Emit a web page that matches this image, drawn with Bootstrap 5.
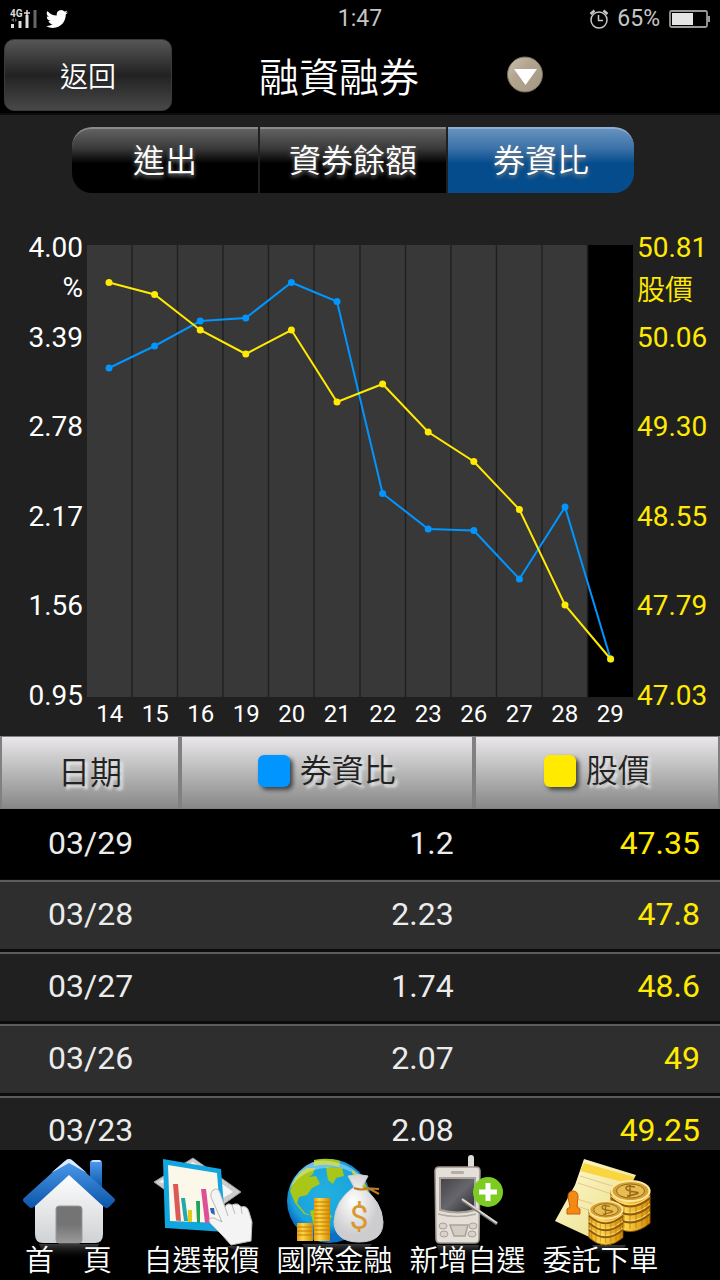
<!DOCTYPE html>
<html lang="zh-Hant">
<head>
<meta charset="utf-8">
<meta name="viewport" content="width=device-width, initial-scale=1">
<title>融資融券</title>
<link href="https://cdn.jsdelivr.net/npm/bootstrap@5.3.0/dist/css/bootstrap.min.css" rel="stylesheet">
<style>
body { font-family: Roboto, "Noto Sans CJK TC", sans-serif; background: #202020; color: #fff; font-weight: 400; }
.cjk { font-family: "Noto Sans CJK TC", sans-serif; font-weight: 350; }
.statusbar { height: 36px; background: #000; color: #c6c6c6; font-size: 23px; line-height: 38px; padding: 0 10px; }
.titlebar { height: 79px; background: #000; border-bottom: 2px solid #0c0c0c; padding: 3px 4px; display: grid; grid-template-columns: 168px 1fr 210px; align-items: start; }
.back-btn { height: 72px; border: 1px solid #3a3a3a; border-radius: 10px; color: #fff; font-size: 28px; padding: 0; background: linear-gradient(#565656, #222 50%, #484848); }
.back-btn:hover, .back-btn:active { color: #fff; }
.page-title { font-size: 40px; line-height: 72px; }
.menu-btn { width: 38px; height: 38px; padding: 0; border: 0; background: none; line-height: 0; }
.tabs { margin: 12px 86px 0 72px; gap: 2px; }
.tabs .btn { flex: 1 1 0; height: 66px; border: 0; border-top: 2px solid #8a8a8a; border-radius: 0; padding: 0 0 6px; color: #fff; font-size: 32px; line-height: 56px; text-shadow: 0 2px 4px #888; background: linear-gradient(#626262, #3a3a3a 30%, #000 54%); }
.tabs .btn:first-child { border-radius: 20px 0 0 20px; }
.tabs .btn:last-child { border-radius: 0 20px 20px 0; }
.tabs .btn.active { color: #fff; border-color: #8eaed0; background: linear-gradient(#6691bd, #3c72a9 30%, #054c8c 54%); }
.chart { display: grid; grid-template-columns: 87px 1fr 87px; margin-top: 34px; padding-bottom: 5px; font-size: 28px; }
.axis { display: grid; grid-template-rows: repeat(5, 1fr) 40px; height: 489px; line-height: 40px; padding-top: 1px; }
.axis-left { text-align: right; padding-right: 4px; }
.axis-right { color: #ffea00; padding-left: 4px; }
.plot { padding-top: 18px; }
.days { display: grid; grid-template-columns: repeat(12, 1fr); font-size: 24px; line-height: 34px; text-align: center; }
.quotes { table-layout: fixed; width: 100%; font-size: 32px; border-collapse: separate; border-spacing: 0; }
.quotes th { height: 73px; padding: 0 0 9px; font-size: 32px; color: #222; text-align: center; border: 2px solid #808080; border-width: 1px 2px; text-shadow: 3px 3px 3px #eee; background: linear-gradient(#e9e7e9, #888); }
.quotes th:first-child { padding: 0 0 5px; }
.quotes td { height: 72px; padding: 0 20px 3px; text-align: right; border-bottom: 3px solid #0c0c0c; border-top: 2px solid #5c5c5c; color: #ececec; }
.quotes td:first-child { text-align: left; padding-left: 48px; }
.quotes td.yel { color: #ffea00; }
.quotes tbody tr:nth-child(even) { background: #2e2e2e; }
.quotes tbody tr:nth-child(odd) { background: #202020; }
.quotes tbody tr:first-child { background: #000; }
.quotes tbody tr:first-child td { border-top-width: 0; border-bottom-width: 1px; height: 71px; }
.swatch { display: inline-block; width: 32px; height: 32px; border-radius: 6px; margin-right: 10px; vertical-align: -5px; box-shadow: 3px 3px 4px #444; }
.bottombar { background: #000; padding: 4px 53px 4px 2px; }
.bottombar a { flex: 1 1 0; min-width: 0; color: #fff; font-size: 29px; line-height: 36px; text-align: center; text-decoration: none; white-space: nowrap; }
.bottombar svg { display: block; margin: 0 auto; }
.bottombar span { display: block; margin-top: -18px; position: relative; }
</style>
</head>
<body class="vh-100 d-flex flex-column overflow-hidden">
<header>
  <div class="statusbar row g-0 align-items-center">
    <div class="col d-flex align-items-center">
      <svg width="28" height="22" viewBox="0 0 28 22" aria-hidden="true"><text x="0" y="9" font-size="10" font-weight="700" fill="#ddd">4G</text><path d="M14 5h6M17 2v6" stroke="#ddd" stroke-width="1.5"/><path d="M17 7v13" stroke="#ddd" stroke-width="3"/><path d="M10 13v7M2.500 16v4" stroke="#ddd" stroke-width="3"/><path d="M25 2v18" stroke="#666" stroke-width="3"/><path d="M1 12l3-2v4zM7 12l-2-2v4z" fill="#666"/></svg>
      <svg class="ms-2" width="22" height="20" viewBox="0 2 24 20" aria-hidden="true"><path fill="#fff" d="M23.950 4.570a10 10 0 0 1-2.820.770 4.960 4.960 0 0 0 2.160-2.720 9.900 9.900 0 0 1-3.120 1.180 4.920 4.920 0 0 0-8.380 4.480A13.930 13.930 0 0 1 1.640 3.160a4.920 4.920 0 0 0 1.520 6.570 4.900 4.900 0 0 1-2.230-.610v.060a4.920 4.920 0 0 0 3.950 4.820 5 5 0 0 1-2.210.080 4.940 4.940 0 0 0 4.600 3.420A9.870 9.870 0 0 1 0 19.540a13.940 13.940 0 0 0 7.550 2.210c9.050 0 14-7.500 14-13.990 0-.210 0-.420-.020-.630a9.940 9.940 0 0 0 2.420-2.560z"/></svg>
    </div>
    <div class="col-auto">1:47</div>
    <div class="col d-flex align-items-center justify-content-end">
      <svg width="20" height="20" viewBox="0 0 20 20" fill="none" stroke="#c6c6c6" stroke-width="1.500" aria-hidden="true"><circle cx="10" cy="11" r="8"/><path d="M9.500 6v5.500H14"/><path d="M1.500 5l4-3.500M14.500 1.500l4 3.500" stroke-width="2.500"/></svg>
      <span class="ms-2 me-2">65%</span>
      <svg width="42" height="20" viewBox="0 0 42 20" aria-hidden="true"><rect x="2" y="2" width="37" height="16" rx="1.500" fill="none" stroke="#999" stroke-width="1.800"/><path d="M4 4h21v12H4z" fill="#e4e4e4"/><path d="M39 7h3v6h-3z" fill="#999"/></svg>
    </div>
  </div>
  <div class="titlebar">
    <button type="button" class="btn back-btn cjk">返回</button>
    <h1 class="page-title cjk text-center m-0">融資融券</h1>
    <button type="button" class="btn menu-btn align-self-center" aria-label="選單"><svg width="38" height="38" viewBox="0 0 38 38"><defs><linearGradient id="tan" x2="1" y2="1"><stop stop-color="#cdc3b3"/><stop offset=".4" stop-color="#b2a48f"/><stop offset="1" stop-color="#a39985"/></linearGradient></defs><circle cx="19" cy="18.500" r="17.500" fill="url(#tan)" stroke="#756b5c"/><path d="M8 13h23L19.500 29z" fill="#fff"/></svg></button>
  </div>
</header>
<nav class="tabs d-flex" aria-label="圖表">
  <button type="button" class="btn cjk">進出</button>
  <button type="button" class="btn cjk">資券餘額</button>
  <button type="button" class="btn cjk active" aria-pressed="true">券資比</button>
</nav>
<section class="chart">
  <div class="axis axis-left"><div>4.00<br>%</div><div>3.39</div><div>2.78</div><div>2.17</div><div>1.56</div><div>0.95</div></div>
  <div class="plot">
    <svg class="d-block w-100" viewBox="0 0 546 452" role="img" aria-label="券資比與股價">
      <rect width="501" height="452" fill="#383838"/><rect x="501" width="45" height="452" fill="#000"/>
      <path d="M45 0V452M90.500 0V452M136 0V452M181.500 0V452M227 0V452M273 0V452M318.500 0V452M364 0V452M409.500 0V452M455 0V452M500.500 0V452" stroke="#202020" stroke-width="1.500"/>
      <g id="blue" fill="#0095ff"></g><g id="yellow" fill="#ffea00"></g>
    </svg>
    <div class="days"><span>14</span><span>15</span><span>16</span><span>19</span><span>20</span><span>21</span><span>22</span><span>23</span><span>26</span><span>27</span><span>28</span><span>29</span></div>
  </div>
  <div class="axis axis-right"><div>50.81<br><span class="cjk">股價</span></div><div>50.06</div><div>49.30</div><div>48.55</div><div>47.79</div><div>47.03</div></div>
</section>
<main class="flex-grow-1 overflow-hidden">
  <table class="quotes">
    <colgroup><col style="width:25%"><col style="width:40.8%"><col style="width:34.2%"></colgroup>
    <thead><tr><th class="cjk">日期</th><th class="cjk"><i class="swatch" style="background:#0095ff"></i>券資比</th><th class="cjk"><i class="swatch" style="background:#ffea00"></i>股價</th></tr></thead>
    <tbody>
      <tr><td>03/29</td><td>1.2</td><td class="yel">47.35</td></tr>
      <tr><td>03/28</td><td>2.23</td><td class="yel">47.8</td></tr>
      <tr><td>03/27</td><td>1.74</td><td class="yel">48.6</td></tr>
      <tr><td>03/26</td><td>2.07</td><td class="yel">49</td></tr>
      <tr><td>03/23</td><td>2.08</td><td class="yel">49.25</td></tr>
    </tbody>
  </table>
</main>
<nav class="bottombar d-flex flex-shrink-0 cjk" aria-label="主選單">
  <a href="#"><svg width="110" height="104" viewBox="0 0 110 104"><defs><linearGradient id="roof" x2="0" y2="1"><stop stop-color="#4f9df0"/><stop offset="1" stop-color="#0b55a8"/></linearGradient><linearGradient id="wall" x2="0" y2="1"><stop stop-color="#fff"/><stop offset="1" stop-color="#cfd2d4"/></linearGradient><linearGradient id="door" x2="0" y2="1"><stop offset=".5" stop-color="#747474"/><stop offset="1" stop-color="#9a9a9a"/></linearGradient><linearGradient id="glow" x2="0" y2="1"><stop stop-color="#777" stop-opacity=".5"/><stop offset="1" stop-color="#222" stop-opacity="0"/></linearGradient></defs>
    <path d="M76 9q0-3 3-3h6q3 0 3 3v25L76 23z" fill="url(#roof)"/><path d="M77 8q1-2 3-2h5q2 0 2 2z" fill="#cfe2fa"/><path d="M55 18L89 46v34q0 9-8 9H29q-8 0-8-9V46z" fill="url(#wall)"/><rect x="42" y="52" width="26" height="37" rx="3" fill="url(#door)" stroke="#999"/><path d="M25 90h60l-6 14H31z" fill="url(#glow)"/><path d="M51 7q4-4 8 0l41 37q2 2 0 4l-5 5q-2 2-5 0L55 21 20 53q-3 2-5 0l-5-5q-2-2 0-4z" fill="url(#roof)"/><path d="M51 7q4-4 8 0l14 12-18-10-18 10z" fill="#dceaff"/></svg><span>首　頁</span></a>
  <a href="#"><svg width="110" height="104" viewBox="0 0 110 104">
    <path d="M7 28L46 4l48 34-37 26z" fill="#ccc" stroke="#999"/><path d="M12 28L46 8l40 30-10 6z" fill="#f6f6f6"/><path d="M16 5l58 10 5 63-61-4z" fill="#12a6e0"/><path d="M21 11l49 8 4 50-51-2z" fill="#fbf7e9"/><path d="M26 30h5l3 37-5-.5z" fill="#dc5a55"/><path d="M34 44h4l3 23h-4z" fill="#20a8ac"/><path d="M41 56h4v12h-4z" fill="#e3ca16"/><path d="M49 47h4v22h-3z" fill="#20a45c"/><path d="M54 35h5l4 34h-5z" fill="#db5096"/><path d="M63 54h4l1 7-4-2z" fill="#3161b8"/>
    <path d="M66 36q5-3 7 3l5 14q2-5 7-2 6-3 9 2 6-2 8 5l3 10-1 19-20 4-9-10-12-12q-3-6 4-5l8 4-11-25q-1-4 2-7z" fill="#f4f4f4" stroke="#bbb"/><path d="M78 53l3 9M85 51l3 9M94 53l1 7" stroke="#bbb" fill="none"/><path d="M80 92h24l-12 8z" fill="url(#glow)"/></svg><span>自選報價</span></a>
  <a href="#"><svg width="110" height="104" viewBox="0 0 110 104"><defs><radialGradient id="sea" cx=".45" cy=".4"><stop stop-color="#22b0e0"/><stop offset=".8" stop-color="#1aa3da"/><stop offset="1" stop-color="#0b70c4"/></radialGradient><linearGradient id="gold"><stop stop-color="#e8a010"/><stop offset=".35" stop-color="#ffd54a"/><stop offset="1" stop-color="#d48a00"/></linearGradient><radialGradient id="bag" cx=".4" cy=".4"><stop stop-color="#fff"/><stop offset="1" stop-color="#cdcdcf"/></radialGradient></defs>
    <circle cx="49" cy="47" r="42" fill="url(#sea)"/><path d="M10 37Q14 21 27 14l8 0-2 6-4 3 7-1 4 8-8 4-5 7-8 2-2 6 8 10 8 3-9-2-9-11zM34 6q14-3 26 1l-1 6q-13-4-25-1zM46 13l16 1 2 8-8 2-3 6-5-4zM30 57l10-3 12 8-6 9-7 14-5-13zM72 16q15 10 18 26l-16-8z" fill="#a9c718"/><path d="M9 36Q21 3 49 7t39 24Q68 10 45 14 21 16 9 36z" fill="#fff" opacity=".35"/>
    <rect x="34" y="44" width="16" height="43" fill="url(#gold)"/><rect x="17" y="69" width="16" height="18" fill="url(#gold)"/><path d="M34 48h16m-16 4h16m-16 4h16m-16 4h16m-16 4h16m-16 4h16m-16 4h16m-16 4h16m-16 4h16M17 73h16m-16 4h16m-16 4h16" stroke="#c07e00" fill="none"/>
    <path d="M68 22q10-3 20 0l-6 11q20 14 21 35 0 20-24 20T54 68q1-22 20-35z" fill="url(#bag)" stroke="#ccc"/><path d="M74 34q8 3 14 0l11 6M84 34l15 1" fill="none" stroke="#bd7d22" stroke-width="2"/><text x="79" y="75" text-anchor="middle" font-family="Roboto" font-size="34" font-weight="400" fill="#d99831">$</text><path d="M22 90h70l-10 12H30z" fill="url(#glow)"/></svg><span>國際金融</span></a>
  <a href="#"><svg width="110" height="104" viewBox="0 0 110 104"><defs><linearGradient id="screen" x2="1" y2="1"><stop stop-color="#444"/><stop offset=".5" stop-color="#66666d"/><stop offset="1" stop-color="#27272b"/></linearGradient></defs>
    <rect x="55" y="1" width="6" height="20" rx="3" fill="#ddd"/><path d="M22 17q0-4 4-4h37q4 0 4 4l-1 68q0 4-4 4H27q-4 0-4-4z" fill="#e4e0d9" stroke="#a0958e" stroke-width="1.500"/><rect x="38" y="17" width="13" height="3" rx="1" fill="#b5aea5"/><path d="M27 24h35v32q-17 5-35 0z" fill="url(#screen)" stroke="#aaa49d" stroke-width="2"/><path d="M25 60q19 5 38 0" fill="none" stroke="#b5aca1" stroke-width="1.500"/><path d="M37 71h18l-3 11H41z" fill="#d2ccc2" stroke="#aaa198" stroke-width="1.500"/><g fill="#d8d2c9" stroke="#aaa198"><ellipse cx="30" cy="72" rx="4" ry="3"/><ellipse cx="60" cy="72" rx="4" ry="3"/><ellipse cx="31" cy="80" rx="4" ry="3"/><ellipse cx="59" cy="80" rx="4" ry="3"/></g><circle cx="75" cy="38" r="15" fill="#7dcc22"/><path d="M75 29v18M66 38h18" stroke="#fff" stroke-width="5"/><path d="M49 46l35 24" stroke="#777" stroke-width="3"/><path d="M49 45l35 24" stroke="#ddd8d0" stroke-width="2"/><path d="M24 91h42l-3 12H27z" fill="url(#glow)"/></svg><span>新增自選</span></a>
  <a href="#"><svg width="110" height="104" viewBox="0 0 110 104"><defs><linearGradient id="paper" x2="1" y2="1"><stop stop-color="#fffad1"/><stop offset="1" stop-color="#e7db80"/></linearGradient><g id="coins"><path d="M0 8v33q19 17 39 0V8z" fill="url(#gold)" stroke="#8b5a0a"/><path d="M0 16q19 17 39 0M0 24q19 17 39 0M0 32q19 17 39 0" fill="none" stroke="#8b5a0a" stroke-width="2"/><path d="M0 14q19 17 39 0M0 22q19 17 39 0M0 30q19 17 39 0" fill="none" stroke="#f6dd89"/><path d="M3 20v23M8 23v22M13 25v21M19 26v21M25 25v21M31 23v21M36 20v22" stroke="#98600c" opacity=".5"/><ellipse cx="19.500" cy="9" rx="19" ry="10" fill="#d4a037" stroke="#ffe8a0" stroke-width="2"/><ellipse cx="19.500" cy="9" rx="14" ry="7" fill="#e5bd52" stroke="#956813"/><path d="M24 5q-9-2-9 1t9 4-8 4M19 3v12" stroke="#9b6814" fill="none" stroke-width="1.500"/></g></defs>
    <path d="M38 5l52 16-32 62-4 5L9 67l20-36z" fill="url(#paper)"/><path d="M38 9l50 14-3 7-51-13z" fill="#f9d640"/><path d="M34 22l42 13M32 29l40 13M28 44l32 10M26 50l24 9" stroke="#ecc48c"/><path d="M22 43q0-6 5-6t5 6l-1 10 3 2v5H21v-5l3-2z" fill="#f28a13" stroke="#cc5d08"/><use href="#coins" x="65" y="28"/><use href="#coins" transform="translate(43 48) scale(.87)"/><path d="M46 91h34l-6 10H52z" fill="url(#glow)"/></svg><span>委託下單</span></a>
</nav>
<script src="https://cdn.jsdelivr.net/npm/bootstrap@5.3.0/dist/js/bootstrap.bundle.min.js"></script>
<script>
const series = {
  blue: [123, 101, 76, 73, 37.5, 56.500, 248.500, 284, 285.500, 334, 262, 414],
  yellow: [37.5, 49.5, 85, 109, 85, 157, 139, 187, 216.500, 264.500, 360, 414]
};
for (const [name, ys] of Object.entries(series)) {
  const pts = ys.map((y, i) => [22 + i * 45.6, y]);
  const color = name === 'blue' ? '#0095ff' : '#ffea00';
  document.getElementById(name).innerHTML =
    `<polyline points="${pts.join(' ')}" fill="none" stroke="${color}" stroke-width="2"/>` +
    pts.map(([x, y]) => `<circle cx="${x}" cy="${y}" r="3.5"/>`).join('');
}
</script>
</body>
</html>
